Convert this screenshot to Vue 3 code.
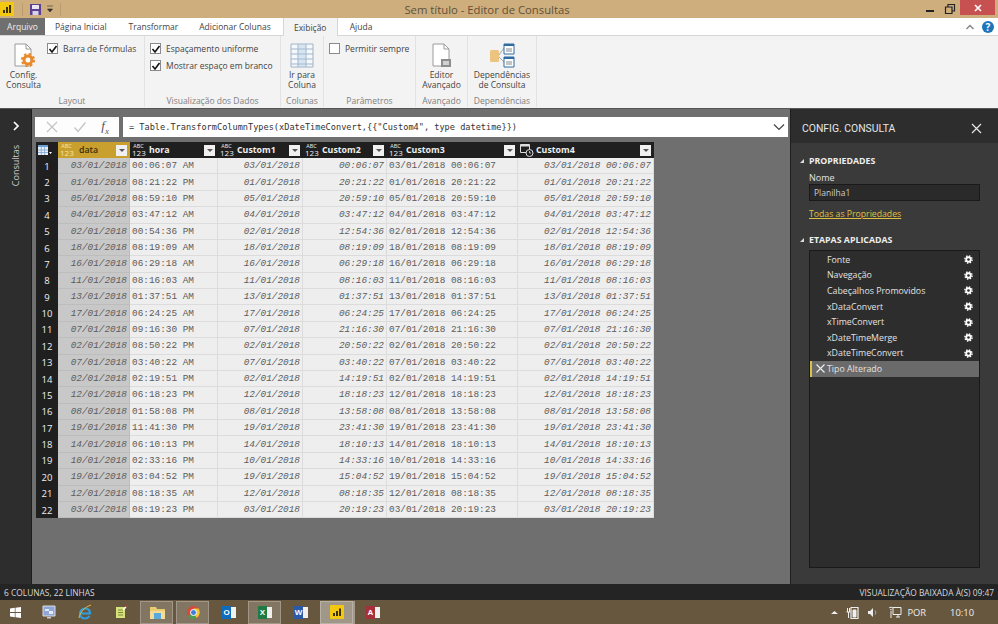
<template>
  <div class="app">
    <!-- title bar -->
    <div class="titlebar">
      <div class="qat">
        <svg class="pbi" width="14" height="14" viewBox="0 0 14 14">
          <rect width="14" height="14" fill="#f2c811" />
          <path d="M3 8h2v3H3zM6 5h2v6H6zM9 3h2v8H9z" fill="#3a3000" />
        </svg>
        <span class="qat-sep"></span>
        <svg width="13" height="13" viewBox="0 0 13 13">
          <path d="M1 1h11v11H1z" fill="#5a3f93" />
          <path d="M3 2h7v4H3z" fill="#e9e6f2" />
          <path d="M3.5 8h6v4h-6z" fill="#d8d2e6" />
        </svg>
        <svg width="8" height="8" viewBox="0 0 8 8">
          <path d="M1 1h6M1.500 4h5l-2.500 3z" fill="#333" stroke="#333" stroke-width="0.6" />
        </svg>
        <span class="qat-sep"></span>
      </div>
      <div class="title">Sem título - Editor de Consultas</div>
      <div class="winctl">
        <svg class="ctl" width="12" height="12" viewBox="0 0 12 12"><path d="M2 8h8" stroke="#222" stroke-width="2" /></svg>
        <svg class="ctl" width="12" height="12" viewBox="0 0 12 12"><path d="M1.500 4h6.500v6.500H1.500zM4 4V1.500h6.500V8H8" fill="none" stroke="#222" stroke-width="1.200" /></svg>
        <div class="close">
          <svg width="10" height="10" viewBox="0 0 10 10"><path d="M2 2l6 6M8 2l-6 6" stroke="#fff" stroke-width="1.600" /></svg>
        </div>
      </div>
    </div>

    <!-- tabs -->
    <div class="tabs">
      <div class="tab file">Arquivo</div>
      <div class="tab t1">Página Inicial</div>
      <div class="tab t2">Transformar</div>
      <div class="tab t3">Adicionar Colunas</div>
      <div class="tab active">Exibição</div>
      <div class="tab t5">Ajuda</div>
      <div class="tabs-right">
        <svg width="10" height="8" viewBox="0 0 10 8"><path d="M1.500 6l3.500-3.500L8.500 6" fill="none" stroke="#888" stroke-width="1.500" /></svg>
        <div class="help">?</div>
      </div>
    </div>

    <!-- ribbon -->
    <div class="ribbon">
      <div class="group g-layout">
        <div class="group-body">
          <div class="big big-config">
            <svg width="24" height="25" viewBox="0 0 24 25">
              <path d="M3 1h11l5 5v17H3z" fill="#fff" stroke="#9a9a9a" />
              <path d="M14 1v5h5" fill="none" stroke="#9a9a9a" />
              <circle cx="16" cy="17" r="4" fill="none" stroke="#e98b2c" stroke-width="3" />
              <circle cx="16" cy="17" r="6" fill="none" stroke="#e98b2c" stroke-width="2.200" stroke-dasharray="2.400 2.300" />
            </svg>
            <span>Config.<br />Consulta</span>
          </div>
          <div class="checks">
            <label class="check"><span class="box on"><svg width="10" height="10" viewBox="0 0 10 10"><path d="M1.500 5l2.500 3 4.500-6" fill="none" stroke="#111" stroke-width="1.600" /></svg></span>Barra de Fórmulas</label>
          </div>
        </div>
        <div class="group-label">Layout</div>
      </div>
      <div class="group g-view">
        <div class="group-body">
          <div class="checks">
            <label class="check"><span class="box on"><svg width="10" height="10" viewBox="0 0 10 10"><path d="M1.500 5l2.500 3 4.500-6" fill="none" stroke="#111" stroke-width="1.600" /></svg></span>Espaçamento uniforme</label>
            <label class="check"><span class="box on"><svg width="10" height="10" viewBox="0 0 10 10"><path d="M1.500 5l2.500 3 4.500-6" fill="none" stroke="#111" stroke-width="1.600" /></svg></span>Mostrar espaço em branco</label>
          </div>
        </div>
        <div class="group-label">Visualização dos Dados</div>
      </div>
      <div class="group g-cols">
        <div class="group-body">
          <div class="big">
            <svg width="24" height="25" viewBox="0 0 24 25">
              <path d="M1 1h22v23H1z" fill="#f6f9fc" stroke="#9fb4c8" />
              <path d="M1 6h22M1 11h22M1 16h22M1 21h22M8 1v23M16 1v23" stroke="#9fb4c8" />
              <path d="M8 1h8v23H8z" fill="#a9c6e2" opacity="0.4" />
            </svg>
            <span>Ir para<br />Coluna</span>
          </div>
        </div>
        <div class="group-label">Colunas</div>
      </div>
      <div class="group g-params">
        <div class="group-body">
          <div class="checks">
            <label class="check"><span class="box"></span>Permitir sempre</label>
          </div>
        </div>
        <div class="group-label">Parâmetros</div>
      </div>
      <div class="group g-adv">
        <div class="group-body">
          <div class="big">
            <svg width="24" height="25" viewBox="0 0 24 25">
              <path d="M3 1h11l5 5v17H3z" fill="#fff" stroke="#9a9a9a" />
              <path d="M14 1v5h5" fill="none" stroke="#9a9a9a" />
              <path d="M11 16h10v8H11z" fill="#8d8d8d" />
              <path d="M13 18h6v4h-6z" fill="#d0d0d0" />
            </svg>
            <span>Editor<br />Avançado</span>
          </div>
        </div>
        <div class="group-label">Avançado</div>
      </div>
      <div class="group g-dep">
        <div class="group-body">
          <div class="big">
            <svg width="26" height="25" viewBox="0 0 26 25">
              <rect x="1" y="7" width="9" height="12" rx="1.500" fill="#edc47f" />
              <path d="M10 12l5-7M10 14l5 5" stroke="#8fb0d0" />
              <path d="M15 1h10v10H15zM15 14h10v10H15z" fill="#fff" stroke="#2f6ca3" />
              <path d="M15 1h10v2H15zM15 14h10v2H15z" fill="#2f6ca3" />
              <path d="M17 6h6M17 8h6M17 19h6M17 21h6" stroke="#8a8a8a" />
            </svg>
            <span>Dependências<br />de Consulta</span>
          </div>
        </div>
        <div class="group-label">Dependências</div>
      </div>
    </div>

    <!-- main -->
    <div class="main">
      <div class="side">
        <svg width="10" height="10" viewBox="0 0 10 10"><path d="M3 1l4 4-4 4" fill="none" stroke="#fff" stroke-width="1.700" /></svg>
        <div class="side-label">Consultas</div>
      </div>

      <div class="center">
        <div class="formula-row">
          <div class="fx-box">
            <svg width="14" height="14" viewBox="0 0 14 14"><path d="M2 2l10 10M12 2L2 12" stroke="#c4c4c4" stroke-width="1.300" /></svg>
            <svg width="14" height="14" viewBox="0 0 14 14"><path d="M1.500 7.500l3.500 4 7.500-9" fill="none" stroke="#c4c4c4" stroke-width="1.300" /></svg>
            <span class="fx">f<sub>x</sub></span>
          </div>
          <div class="formula">
            <span>{{ formula }}</span>
            <svg width="12" height="8" viewBox="0 0 12 8"><path d="M1 1.500l5 5 5-5" fill="none" stroke="#444" stroke-width="1.200" /></svg>
          </div>
        </div>

        <div class="grid">
          <div class="row head">
            <div class="h-corner">
              <svg width="14" height="11" viewBox="0 0 14 11">
                <path d="M0 0h10v10H0z" fill="#e8eef6" />
                <path d="M0 0h10v2H0z" fill="#6f9fd0" />
                <path d="M0 5h10M0 7.500h10M3.300 2v8M6.600 2v8" stroke="#6f9fd0" stroke-width="0.700" />
                <path d="M11 7h3l-1.500 2z" fill="#fff" />
              </svg>
            </div>
            <div v-for="col in columns" :key="col.name" class="h-cell" :class="{ sel: col.name === 'data' }">
              <svg v-if="col.datetime" class="dt" width="14" height="13" viewBox="0 0 14 13">
                <path d="M.5.5h9v8h-9z" fill="none" stroke="#ddd" />
                <path d="M.5.500h9v2h-9z" fill="#ddd" />
                <circle cx="9.500" cy="9" r="3.500" fill="#1f1f1f" stroke="#ddd" />
                <path d="M9.500 7v2h1.500" fill="none" stroke="#ddd" stroke-width="0.800" />
              </svg>
              <span v-else class="abc"><span class="abc-top">ABC</span><span class="abc-num">123</span></span>
              <span class="h-name">{{ col.name }}</span>
              <span class="h-btn"><span class="tri"></span></span>
            </div>
          </div>

          <div v-for="(r, i) in rows" :key="i" class="row">
            <div class="idx">{{ i + 1 }}</div>
            <div class="cell ital sel">{{ r.date }}</div>
            <div class="cell">{{ r.hora }}</div>
            <div class="cell ital">{{ r.date }}</div>
            <div class="cell ital">{{ r.time }}</div>
            <div class="cell">{{ r.date }} {{ r.time }}</div>
            <div class="cell ital">{{ r.date }} {{ r.time }}</div>
          </div>
        </div>
      </div>

      <div class="panel">
        <div class="panel-head">
          <span>CONFIG. CONSULTA</span>
          <svg width="11" height="11" viewBox="0 0 11 11"><path d="M1 1l9 9M10 1l-9 9" stroke="#e6e6e6" stroke-width="1.200" /></svg>
        </div>
        <div class="panel-body">
          <div class="sec-title sec-first"><span class="caret"></span>PROPRIEDADES</div>
          <div class="prop-label">Nome</div>
          <div class="prop-input">Planilha1</div>
          <div class="prop-link">Todas as Propriedades</div>
          <div class="sec-title sec-steps"><span class="caret"></span>ETAPAS APLICADAS</div>
          <div class="steps">
            <div v-for="s in steps" :key="s" class="step">
              <span>{{ s }}</span>
              <svg width="9" height="9" viewBox="0 0 10 10">
                <circle cx="5" cy="5" r="2.500" fill="none" stroke="#fff" stroke-width="2" />
                <circle cx="5" cy="5" r="4" fill="none" stroke="#fff" stroke-width="1.600" stroke-dasharray="1.570 1.570" />
              </svg>
            </div>
            <div class="step current">
              <svg width="9" height="9" viewBox="0 0 9 9"><path d="M.5.5l8 8M8.500.5l-8 8" stroke="#eee" stroke-width="1.100" /></svg>
              <span>Tipo Alterado</span>
            </div>
          </div>
        </div>
      </div>
    </div>

    <!-- status -->
    <div class="status">
      <span>6 COLUNAS, 22 LINHAS</span>
      <span>VISUALIZAÇÃO BAIXADA À(S) 09:47</span>
    </div>

    <!-- taskbar -->
    <div class="taskbar">
      <div class="task start">
        <svg width="11" height="11" viewBox="0 0 11 11"><path d="M0 1.500l4.800-.7v4.300H0zM5.500.7L11 0v5.100H5.500zM0 5.900h4.800v4.300L0 9.500zM5.500 5.900H11V11l-5.500-.8z" fill="#fff" /></svg>
      </div>
      <div class="task">
        <svg width="14" height="15" viewBox="0 0 14 15"><path d="M1 1h12v10H1z" fill="#8ea6d8" stroke="#ddd" /><path d="M3 4h4v2H3zM7 6h4v3H7z" fill="#e4e9f6" /><path d="M5 12h4v1.500H5z" fill="#ccc" /></svg>
      </div>
      <div class="task">
        <svg width="16" height="16" viewBox="0 0 16 16"><path d="M3 9.500h10c0-3-2-5-5-5s-5 2.500-5 5.500 2.500 4.500 5 4.500c2 0 3.500-1 4.500-2.500" fill="none" stroke="#2f9fe0" stroke-width="2.200" /><path d="M2 14c1-6 6-11 12-13" fill="none" stroke="#e8b93a" stroke-width="1" /></svg>
      </div>
      <div class="task">
        <svg width="13" height="14" viewBox="0 0 13 14"><path d="M1 2h9v11H1z" fill="#d7e27a" /><path d="M3 5h5M3 7.500h5M3 10h5" stroke="#7a8a3a" /><path d="M8 5l3-3" stroke="#fff" stroke-width="1.500" /><circle cx="12" cy="1" r="0.800" fill="#d33" /></svg>
      </div>
      <div class="task on">
        <svg width="15" height="13" viewBox="0 0 15 13"><path d="M0 1h6l1 2h8v10H0z" fill="#eacb70" /><path d="M0 5h15v8H0z" fill="#f3dc96" /><path d="M4 7h7v6H4z" fill="#5aa9dc" /></svg>
      </div>
      <div class="task on">
        <svg width="13" height="13" viewBox="0 0 13 13"><circle cx="6.500" cy="6.500" r="6.500" fill="#d9483b" /><path d="M6.500 6.500L1 10a6.500 6.500 0 0 0 8 2.500z" fill="#4a9e4f" /><path d="M6.500 6.500l3 5.500a6.500 6.500 0 0 0 2-9.500H6.500z" fill="#f3c52f" /><circle cx="6.500" cy="6.500" r="3" fill="#3f7fd9" stroke="#fff" /></svg>
      </div>
      <div class="task">
        <div class="app-ico outlook"><b>O</b><i></i></div>
      </div>
      <div class="task on">
        <div class="app-ico excel"><b>X</b><i></i></div>
      </div>
      <div class="task">
        <div class="app-ico word"><b>W</b><i></i></div>
      </div>
      <div class="task on pbi-task">
        <svg width="14" height="14" viewBox="0 0 14 14"><rect width="14" height="14" rx="1" fill="#f2c811" /><path d="M3 8h2v3H3zM6 6h2v5H6zM9 3.500h2V11H9z" fill="#3a3000" /></svg>
      </div>
      <div class="task">
        <div class="app-ico access"><b>A</b><i></i></div>
      </div>
      <div class="tray">
        <svg class="tr-up" width="7" height="5" viewBox="0 0 7 5"><path d="M0 4l3.500-3L7 4z" fill="#eee" /></svg>
        <svg class="tr-bat" width="13" height="13" viewBox="0 0 13 13"><path d="M5 1.500h7v11H5z" fill="none" stroke="#eee" stroke-width="1.200" /><path d="M7 4h3v7H7zM1.500 2v4M3.500 2v4M0.500 6h4M2.500 6v6" fill="#eee" stroke="#eee" /></svg>
        <svg class="tr-snd" width="11" height="11" viewBox="0 0 11 11"><path d="M1 4h2l3-3v9L3 7H1z" fill="#eee" /><path d="M8 3.500c1 1 1 3 0 4" fill="none" stroke="#bbb" /></svg>
        <svg class="tr-net" width="14" height="13" viewBox="0 0 14 13"><path d="M5 1.500h8v7H5zM8 11h4M10 9v2" fill="none" stroke="#eee" /><path d="M1 2c1-1 3-1 4 0M2 4c.6-.6 1.400-.6 2 0M3 5v7" fill="none" stroke="#eee" /></svg>
        <span class="tr-lang">POR</span>
        <span class="tr-time">10:10</span>
      </div>
    </div>
  </div>
</template>

<script setup>
const formula = '= Table.TransformColumnTypes(xDateTimeConvert,{{"Custom4", type datetime}})'

const columns = [
  { name: 'data' },
  { name: 'hora' },
  { name: 'Custom1' },
  { name: 'Custom2' },
  { name: 'Custom3' },
  { name: 'Custom4', datetime: true },
]

const raw = [
  ['03/01/2018', '00:06:07 AM'],
  ['01/01/2018', '08:21:22 PM'],
  ['05/01/2018', '08:59:10 PM'],
  ['04/01/2018', '03:47:12 AM'],
  ['02/01/2018', '00:54:36 PM'],
  ['18/01/2018', '08:19:09 AM'],
  ['16/01/2018', '06:29:18 AM'],
  ['11/01/2018', '08:16:03 AM'],
  ['13/01/2018', '01:37:51 AM'],
  ['17/01/2018', '06:24:25 AM'],
  ['07/01/2018', '09:16:30 PM'],
  ['02/01/2018', '08:50:22 PM'],
  ['07/01/2018', '03:40:22 AM'],
  ['02/01/2018', '02:19:51 PM'],
  ['12/01/2018', '06:18:23 PM'],
  ['08/01/2018', '01:58:08 PM'],
  ['19/01/2018', '11:41:30 PM'],
  ['14/01/2018', '06:10:13 PM'],
  ['10/01/2018', '02:33:16 PM'],
  ['19/01/2018', '03:04:52 PM'],
  ['12/01/2018', '08:18:35 AM'],
  ['03/01/2018', '08:19:23 PM'],
]

const to24 = (hora) => {
  const [t, ap] = hora.split(' ')
  const [h, m, s] = t.split(':')
  const hh = (Number(h) % 12) + (ap === 'PM' ? 12 : 0)
  return `${String(hh).padStart(2, '0')}:${m}:${s}`
}

const rows = raw.map(([date, hora]) => ({ date, hora, time: to24(hora) }))

const steps = [
  'Fonte',
  'Navegação',
  'Cabeçalhos Promovidos',
  'xDataConvert',
  'xTimeConvert',
  'xDateTimeMerge',
  'xDateTimeConvert',
]
</script>

<style>
html,
body {
  margin: 0;
  overflow: hidden;
  background: #2d2d2d;
}
</style>

<style scoped>
.app {
  width: 998px;
  height: 624px;
  display: flex;
  flex-direction: column;
  overflow: hidden;
  font-family: "Open Sans", "Noto Sans", sans-serif;
  font-size: 8.5px;
  color: #444;
}

/* title bar */
.titlebar {
  height: 18px;
  flex: none;
  background: #cfae7e;
  display: grid;
  grid-template-columns: 1fr auto 1fr;
  align-items: center;
}
.qat {
  display: flex;
  align-items: center;
  gap: 4px;
}
.qat .pbi {
  margin-right: 2px;
}
.qat-sep {
  width: 1px;
  height: 13px;
  background: #b89b6f;
  margin: 0 2px;
}
.title {
  font-size: 11.3px;
  color: #5f5138;
  transform: translateX(-12px);
}
.winctl {
  display: flex;
  justify-content: flex-end;
  align-items: center;
  height: 18px;
}
.ctl {
  margin-right: 8px;
}
.ctl + .ctl {
  margin-right: 4px;
}
.close {
  width: 35px;
  height: 15px;
  margin: 0 3px 3px 0;
  background: #c75050;
  display: flex;
  align-items: center;
  justify-content: center;
}

/* tabs */
.tabs {
  height: 18px;
  flex: none;
  background: #fff;
  border-bottom: 1px solid #d6d6d6;
  box-sizing: border-box;
  display: flex;
  align-items: stretch;
  position: relative;
}
.tab {
  display: flex;
  align-items: center;
  color: #444;
}
.tab.file {
  width: 45px;
  justify-content: center;
  background: #6f6f6f;
  color: #eee;
}
.t1 {
  margin-left: 10px;
}
.t2 {
  margin-left: 22px;
}
.t3 {
  margin-left: 21px;
}
.tab.active {
  width: 55px;
  margin-left: 12px;
  justify-content: center;
  background: #f3f3f3;
  margin-bottom: -1px;
  border-left: 1px solid #d6d6d6;
  border-right: 1px solid #d6d6d6;
  box-sizing: border-box;
}
.t5 {
  margin-left: 12px;
}
.tabs-right {
  margin-left: auto;
  margin-right: 4px;
  display: flex;
  align-items: center;
  gap: 7px;
}
.help {
  width: 12px;
  height: 12px;
  border-radius: 50%;
  background: #1c75bc;
  color: #fff;
  font-weight: 700;
  font-size: 10px;
  line-height: 12px;
  text-align: center;
}

/* ribbon */
.ribbon {
  height: 72px;
  flex: none;
  background: #f3f3f3;
  display: flex;
}
.group {
  display: flex;
  flex-direction: column;
  box-sizing: border-box;
  border-right: 1px solid #e2e2e2;
  margin-bottom: 1px;
}
.g-layout { width: 145px; }
.g-view { width: 136px; }
.g-cols { width: 43px; }
.g-params { width: 92px; }
.g-adv { width: 52px; }
.g-dep { width: 69px; }
.group-body {
  flex: 1;
  display: flex;
  min-height: 0;
}
.group-label {
  height: 13px;
  text-align: center;
  color: #808080;
  line-height: 13px;
}
.big {
  flex: 1;
  display: flex;
  flex-direction: column;
  align-items: center;
  text-align: center;
  padding-top: 7px;
  line-height: 10px;
  white-space: nowrap;
}
.big svg {
  margin-bottom: 2px;
  flex: none;
}
.big-config {
  flex: none;
  width: 47px;
}
.checks {
  padding: 7px 0 0 5px;
  display: flex;
  flex-direction: column;
  gap: 6px;
  white-space: nowrap;
}
.g-layout .checks {
  padding-left: 0;
}
.check {
  display: flex;
  align-items: center;
  gap: 5px;
  height: 11px;
}
.box {
  width: 9px;
  height: 9px;
  background: #fff;
  border: 1px solid #8a8a8a;
  display: flex;
  align-items: center;
  justify-content: center;
  flex: none;
}
.box svg {
  flex: none;
}

/* main */
.main {
  flex: 1;
  min-height: 0;
  display: flex;
  background: #6f6f6f;
  border-top: 1px solid #555;
  box-sizing: border-box;
}
.side {
  width: 32px;
  flex: none;
  box-sizing: border-box;
  background: #2d2d2d;
  border-right: 1px solid #1e1e1e;
  display: flex;
  flex-direction: column;
  align-items: center;
  padding-top: 12px;
}
.side-label {
  writing-mode: vertical-rl;
  transform: rotate(180deg);
  margin-top: 14px;
  color: #ccc;
  font-size: 9px;
}
.center {
  flex: 1;
  min-width: 0;
  padding: 8px 2px 0 3px;
}
.formula-row {
  display: flex;
  gap: 4px;
  height: 20px;
}
.fx-box {
  width: 84px;
  flex: none;
  background: #fdfdfd;
  display: flex;
  align-items: center;
  justify-content: space-around;
  padding: 0 3px;
  box-sizing: border-box;
}
.fx {
  font-family: "Liberation Serif", serif;
  font-style: italic;
  font-size: 13px;
  color: #555;
}
.fx sub {
  font-size: 9px;
}
.formula {
  flex: 1;
  background: #fff;
  display: flex;
  align-items: center;
  justify-content: space-between;
  padding: 0 3px 0 6px;
  font-family: "DejaVu Sans Mono", monospace;
  font-size: 8.6px;
  color: #333;
}
.grid {
  margin: 5px 0 0 1px;
  width: 618px;
  background: #eee;
}
.row {
  display: grid;
  grid-template-columns: 22px 72px 88px 85px 84px 131px 136px;
  height: 16.38px;
  font-family: "Liberation Mono", monospace;
  font-size: 9.4px;
  color: #5c5c5c;
}
.row.head {
  height: 16px;
  background: #1f1f1f;
  font-family: "Open Sans", sans-serif;
  color: #eee;
}
.h-corner {
  display: flex;
  align-items: center;
  padding-left: 2px;
}
.h-cell {
  display: flex;
  align-items: center;
  padding: 0 3px 0 2px;
  min-width: 0;
}
.h-cell.sel {
  background: #c9a02e;
  color: #3a2f10;
}
.abc {
  display: flex;
  flex-direction: column;
  width: 13px;
  text-align: center;
  flex: none;
}
.abc-top {
  font-size: 5.500px;
  line-height: 6px;
}
.abc-num {
  font-size: 8px;
  line-height: 8px;
}
.sel .abc {
  color: #f5e6ae;
}
.dt {
  flex: none;
  margin-right: -2px;
}
.h-name {
  margin-left: 4px;
  font-weight: 700;
  font-size: 8.8px;
  flex: 1;
}
.sel .h-name {
  margin-left: 6px;
  font-weight: 600;
}
.h-btn {
  width: 11px;
  height: 11px;
  background: #f0f0f0;
  display: flex;
  align-items: center;
  justify-content: center;
  flex: none;
}
.tri {
  width: 0;
  height: 0;
  border-left: 3px solid transparent;
  border-right: 3px solid transparent;
  border-top: 3px solid #555;
}
.idx {
  background: #1f1f1f;
  color: #f0f0f0;
  font-family: "Open Sans", sans-serif;
  font-size: 9.500px;
  display: flex;
  align-items: center;
  justify-content: center;
}
.cell {
  display: flex;
  align-items: center;
  padding: 0 2px;
  background: #eee;
  border-right: 1px solid #dcdcdc;
  border-bottom: 1px solid #dcdcdc;
  box-sizing: border-box;
  white-space: nowrap;
  overflow: hidden;
}
.cell.ital {
  font-style: italic;
  justify-content: flex-end;
}
.cell.sel {
  background: #c8c8c8;
  border-color: #bdbdbd;
}

/* query settings */
.panel {
  width: 208px;
  flex: none;
  box-sizing: border-box;
  background: #2d2d2d;
  border-left: 1px solid #1e1e1e;
  display: flex;
  flex-direction: column;
}
.panel-head {
  height: 30px;
  margin-top: 4px;
  flex: none;
  display: flex;
  align-items: center;
  justify-content: space-between;
  padding: 0 16px 0 11px;
  color: #e6e6e6;
  font-family: "Roboto", sans-serif;
  font-size: 10.4px;
}
.panel-body {
  flex: 1;
  min-height: 0;
  background: #3a3a3a;
  padding-left: 18px;
  padding-right: 18px;
  color: #e2e2e2;
  display: flex;
  flex-direction: column;
}
.sec-title {
  position: relative;
  font-weight: 700;
  font-size: 8.8px;
  color: #eee;
  line-height: 12px;
}
.sec-first {
  margin-top: 12px;
}
.sec-steps {
  margin-top: 14px;
}
.caret {
  position: absolute;
  left: -9px;
  top: 4px;
  width: 0;
  height: 0;
  border-left: 4px solid transparent;
  border-bottom: 4px solid #ddd;
}
.prop-label {
  margin-top: 5px;
  font-size: 9px;
  line-height: 12px;
}
.prop-input {
  height: 17px;
  box-sizing: border-box;
  background: #2a2a2a;
  border: 1px solid #1a1a1a;
  padding-left: 4px;
  line-height: 15px;
  color: #ccc;
}
.prop-link {
  margin-top: 7px;
  color: #e0c040;
  text-decoration: underline;
  line-height: 12px;
  font-size: 8.7px;
}
.steps {
  margin-top: 4px;
  height: 318px;
  box-sizing: border-box;
  background: #2d2d2d;
  border: 1px solid #1a1a1a;
  padding-top: 1px;
}
.step {
  height: 15.6px;
  display: flex;
  align-items: center;
  justify-content: space-between;
  padding: 0 6px 0 17px;
  font-size: 8.8px;
}
.step.current {
  justify-content: flex-start;
  gap: 2px;
  padding-left: 4px;
  background: #6a6a6a;
  border-left: 2px solid #d8c24a;
  box-sizing: border-box;
}

/* status */
.status {
  height: 16px;
  flex: none;
  background: #242424;
  color: #d8d8d8;
  display: flex;
  justify-content: space-between;
  align-items: center;
  padding: 0 4px;
  font-size: 8.4px;
}

/* taskbar */
.taskbar {
  height: 24px;
  flex: none;
  background: #67573f;
  display: flex;
  align-items: center;
}
.task {
  width: 36px;
  height: 22px;
  display: flex;
  align-items: center;
  justify-content: center;
  position: relative;
  flex: none;
}
.task.start {
  width: 31px;
}
.task.on::before {
  content: "";
  position: absolute;
  left: 1px;
  right: 2px;
  top: 0;
  bottom: -1px;
  background: rgba(255, 255, 255, 0.18);
  border: 1px solid rgba(255, 255, 255, 0.25);
}
.pbi-task::before {
  background: rgba(255, 255, 255, 0.38) !important;
  box-shadow: 2px 0 0 rgba(255, 255, 255, 0.4);
}
.task > svg,
.task > div {
  position: relative;
}
.app-ico {
  width: 14px;
  height: 13px;
  display: flex;
  align-items: stretch;
  color: #fff;
  font-size: 8px;
  line-height: 13px;
  font-family: "Liberation Sans", sans-serif;
}
.app-ico b {
  width: 9px;
  text-align: center;
}
.app-ico i {
  width: 5px;
  background: #f0f0f0;
  margin: 1px 0;
}
.outlook b { background: #0f6cbd; }
.excel b { background: #1f7a43; }
.word b { background: #2b5aa8; }
.access b { background: #a5303a; }
.tray {
  margin-left: auto;
  display: flex;
  align-items: center;
  color: #eee;
  font-size: 9.4px;
}
.tr-bat { margin-left: 8px; }
.tr-snd { margin-left: 8px; }
.tr-net { margin-left: 10px; }
.tr-lang { margin-left: 5px; }
.tr-time {
  margin-left: 24px;
  margin-right: 24px;
}
</style>
